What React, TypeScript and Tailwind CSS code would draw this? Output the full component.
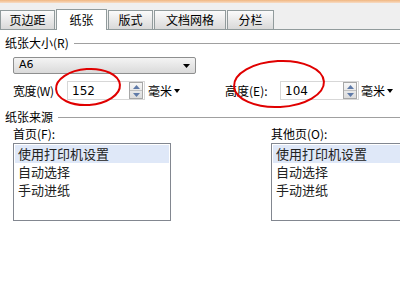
import React from "react";

const cjk = { fontFamily: '"Noto Sans CJK SC", "Liberation Sans", sans-serif' };

function Tab({ label, w, selected }: { label: string; w: number; selected?: boolean }) {
  if (selected) {
    return (
      <div
        className="h-[21px] -mb-px bg-white border border-b-0 border-[#919b9c] flex items-center justify-center text-[12px] text-black relative z-10"
        style={{ width: w }}
      >
        {label}
      </div>
    );
  }
  return (
    <div
      className="h-[19px] border border-b-0 border-[#919b9c] bg-gradient-to-b from-[#fbfbfb] to-[#d9d9d9] flex items-center justify-center text-[12px] text-black"
      style={{ width: w }}
    >
      {label}
    </div>
  );
}

function Spinner() {
  return (
    <div className="w-[14px] h-[17px] border border-[#a7a7a7] bg-gradient-to-b from-[#f7f7f7] to-[#dcdcdc] flex flex-col">
      <div className="flex-1 flex items-center justify-center border-b border-[#c0c0c0]">
        <svg width="7" height="4" viewBox="0 0 7 4"><path d="M0 4 L3.5 0 L7 4 Z" fill="#5f7aa8" /></svg>
      </div>
      <div className="flex-1 flex items-center justify-center">
        <svg width="7" height="4" viewBox="0 0 7 4"><path d="M0 0 L3.5 4 L7 0 Z" fill="#5f7aa8" /></svg>
      </div>
    </div>
  );
}

function NumInput({ value, w }: { value: string; w: number }) {
  return (
    <div
      className="h-[19px] shrink-0 border border-[#d7d7d7] bg-white flex items-center justify-between pl-[4px] pr-[1px]"
      style={{ width: w }}
    >
      <span className="text-[12px] text-black" style={{ fontFamily: '"DejaVu Sans", sans-serif' }}>{value}</span>
      <Spinner />
    </div>
  );
}

function Unit() {
  return (
    <div className="flex items-center gap-[2px] text-[12px] text-black">
      <span>毫米</span>
      <svg width="6" height="4" viewBox="0 0 6 4"><path d="M0 0 L3 4 L6 0 Z" fill="#000" /></svg>
    </div>
  );
}

function ListBox({ w }: { w: number }) {
  const items = ["使用打印机设置", "自动选择", "手动进纸"];
  return (
    <div className="h-[78px] shrink-0 border border-[#828790] bg-white pt-px px-px" style={{ width: w }}>
      {items.map((t, i) => (
        <div
          key={t}
          className={`h-[18px] flex items-center pl-[3px] text-[13px] text-[#222] ${i === 0 ? "bg-[#dfe8f8]" : ""}`}
        >
          {t}
        </div>
      ))}
    </div>
  );
}

export default function App() {
  return (
    <div className="w-[400px] h-[282px] bg-white overflow-hidden relative" style={cjk}>
      <div className="h-[3px] bg-gradient-to-b from-[#f0b680] to-[#f7dcc4]" />
      <div className="h-[27px] bg-[#efefef] flex items-end border-b border-[#919b9c]">
        <div className="flex items-end gap-[1px]">
          <Tab label="页边距" w={55} />
          <Tab label="纸张" w={51} selected />
          <Tab label="版式" w={45} />
          <Tab label="文档网格" w={72} />
          <Tab label="分栏" w={47} />
        </div>
      </div>

      <div className="pl-[5px] pt-[4px]">
        <div className="flex items-center gap-[5px] h-[18px]">
          <span className="text-[12px] text-black whitespace-nowrap">纸张大小(R)</span>
          <div className="flex-1 h-px bg-[#a0a0a0]" />
        </div>

        <div className="pl-[8px] mt-[5px]">
          <div className="w-[183px] h-[17px] rounded-[2px] border border-[#8e8f8f] bg-gradient-to-b from-[#f4f4f4] to-[#dadada] flex items-center justify-between pl-[5px] pr-[5px]">
            <span className="text-[11px] text-black" style={{ fontFamily: '"DejaVu Sans", sans-serif' }}>A6</span>
            <svg width="7" height="4" viewBox="0 0 7 4"><path d="M0 0 L3.5 4 L7 0 Z" fill="#000" /></svg>
          </div>

          <div className="flex items-center mt-[7px] h-[19px]">
            <span className="w-[54px] shrink-0 text-[12px] tracking-[-0.4px] text-black whitespace-nowrap">宽度(W)</span>
            <NumInput value="152" w={78} />
            <div className="ml-[3px] shrink-0"><Unit /></div>
            <span className="ml-[45px] w-[55px] shrink-0 text-[12px] text-black whitespace-nowrap">高度(E):</span>
            <NumInput value="104" w={79} />
            <div className="ml-[2px] shrink-0"><Unit /></div>
          </div>
        </div>

        <div className="flex items-center gap-[5px] h-[18px] mt-[8px]">
          <span className="text-[12px] text-black whitespace-nowrap">纸张来源</span>
          <div className="flex-1 h-px bg-[#a0a0a0]" />
        </div>

        <div className="flex pl-[8px]">
          <div className="w-[258px] shrink-0">
            <div className="text-[12px] text-black h-[16px] leading-[16px] mb-[1px]">首页(F):</div>
            <ListBox w={158} />
          </div>
          <div className="shrink-0">
            <div className="text-[12px] text-black h-[16px] leading-[16px] mb-[1px]">其他页(O):</div>
            <ListBox w={140} />
          </div>
        </div>
      </div>

      <svg className="absolute left-0 top-0 pointer-events-none" width="400" height="282">
        <ellipse cx="88" cy="87" rx="32" ry="18" fill="none" stroke="#e00000" strokeWidth="2" transform="rotate(-4 88 87)" />
        <ellipse cx="279" cy="84" rx="45" ry="23" fill="none" stroke="#e00000" strokeWidth="2" transform="rotate(-3 279 84)" />
      </svg>
    </div>
  );
}
